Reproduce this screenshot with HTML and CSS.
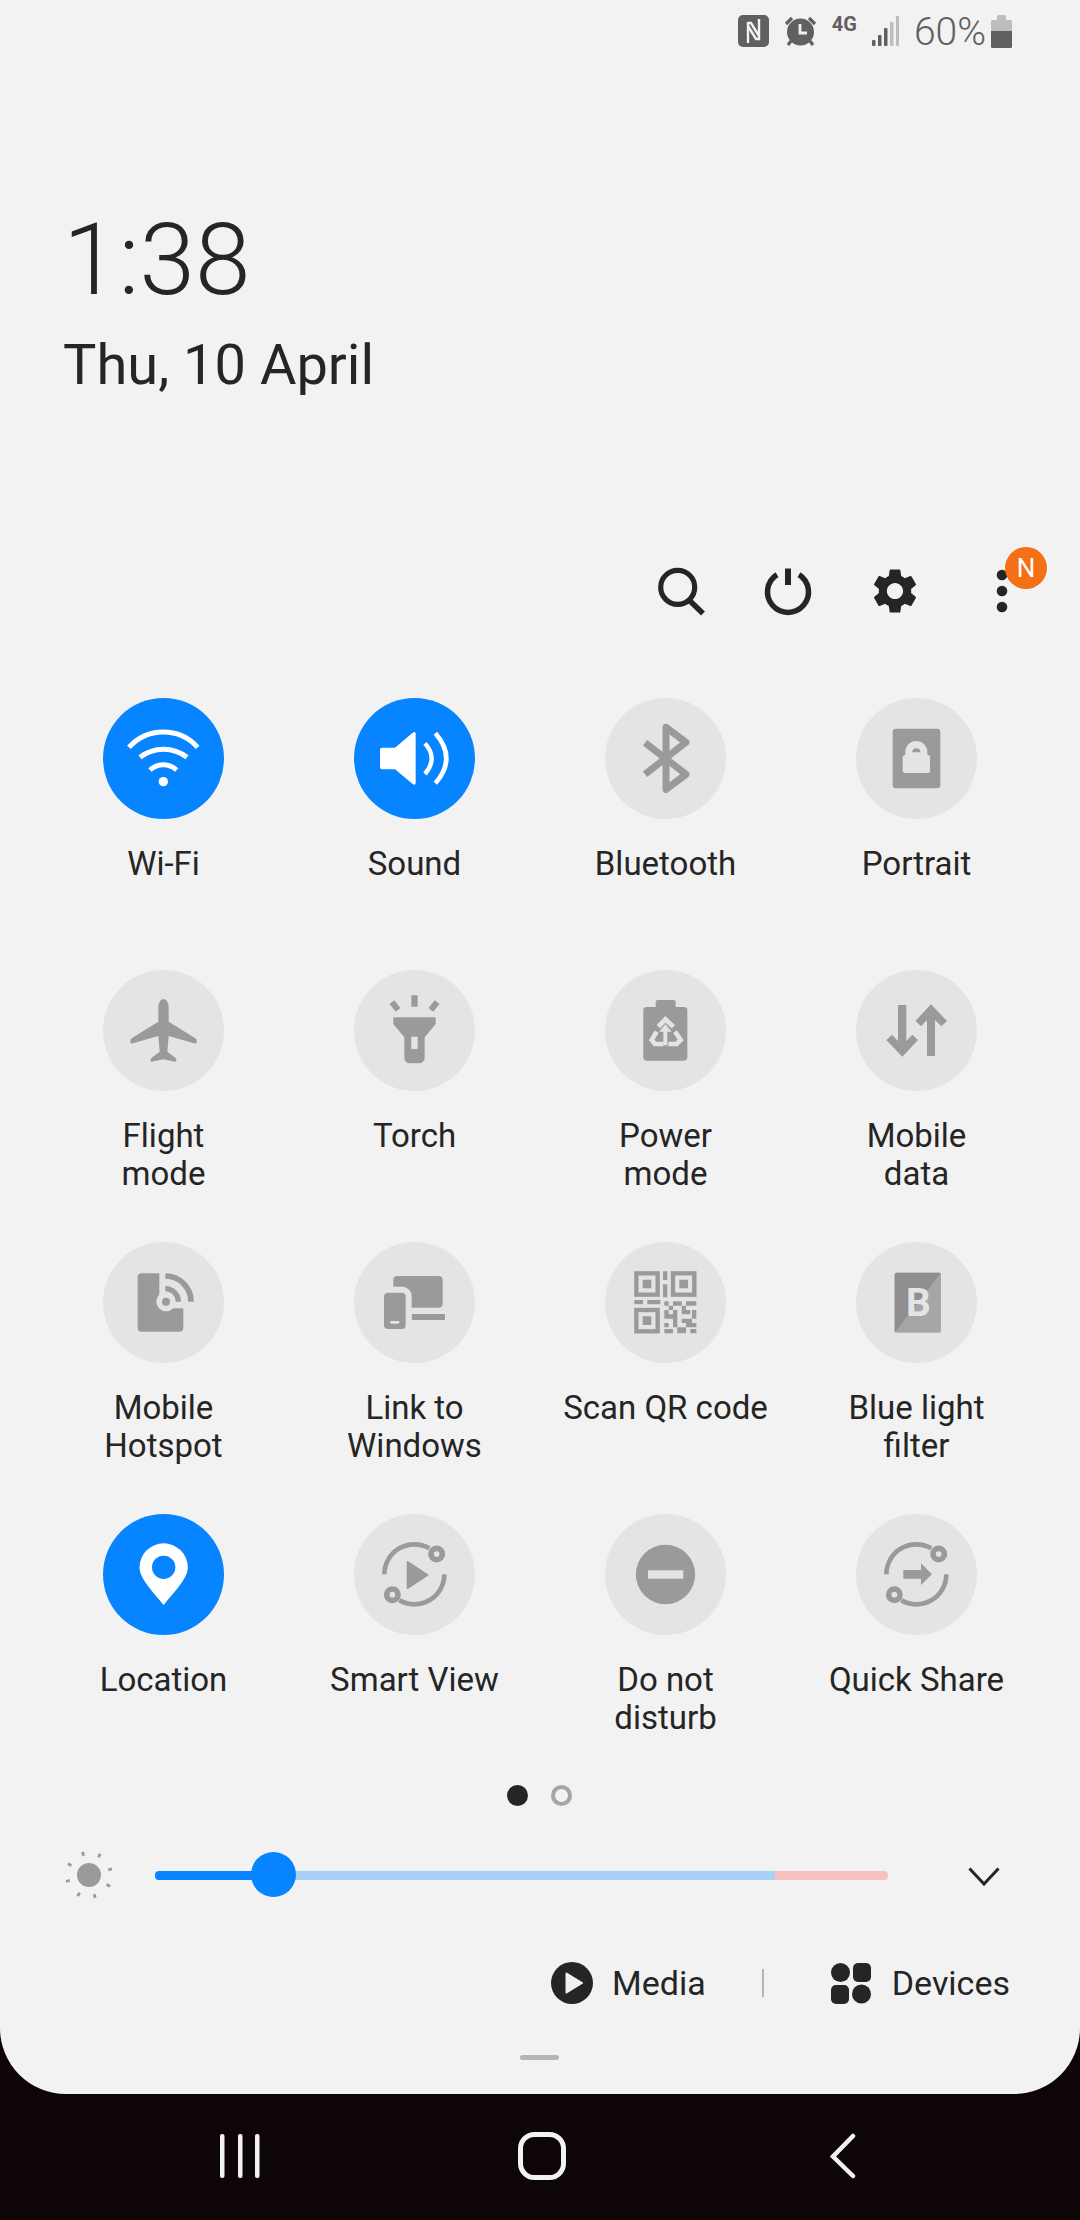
FILE: index.html
```html
<!DOCTYPE html>
<html lang="en">
<head>
    <meta charset="UTF-8">
    <meta name="viewport" content="width=device-width, initial-scale=1.0">
    <title>Quick panel</title>
    <link rel="stylesheet" href="styles.css">
</head>
<body>
    <div id="panel">
        <div id="status">
            <svg class="st-nfc" width="31" height="32" viewBox="0 0 31 32"><rect width="31" height="32" rx="5" fill="#606060"/><path d="M10 28V8h3l8 13M21 4v20h-3L10 11" fill="none" stroke="#f2f2f2" stroke-width="2.400"/></svg>
            <svg class="st-alarm" width="33" height="32" viewBox="0 0 33 32"><circle cx="16.500" cy="17" r="13.500" fill="#606060"/><path d="M2 9l6-6M25 3l6 6M7 26l-3 4M26 26l3 4" stroke="#606060" stroke-width="3.200" fill="none"/><path d="M16 9v9h7" stroke="#f2f2f2" stroke-width="2.800" fill="none"/></svg>
            <span class="st-net">4G</span>
            <svg class="st-signal" width="28" height="32" viewBox="0 0 28 32"><g fill="#606060"><rect x="1" y="24" width="3.500" height="6" rx="1"/><rect x="7" y="19" width="3.500" height="11" rx="1"/><rect x="13" y="12" width="3.500" height="18" rx="1"/></g><g fill="#bdbdbd"><rect x="19" y="6" width="3.500" height="24" rx="1"/><rect x="25" y="0" width="3" height="30" rx="1"/></g></svg>
            <span class="st-level">60%</span>
            <svg class="st-batt" width="21" height="33" viewBox="0 0 21 33"><path d="M6 1.500Q6 0 7.500 0h6Q15 0 15 1.500V5h4.500Q21 5 21 6.500V16H0V6.500Q0 5 1.500 5H6z" fill="#bdbdbd"/><path d="M0 16h21v15.500q0 1.500-1.500 1.500h-18Q0 33 0 31.500z" fill="#606060"/></svg>
        </div>

        <div id="clock">
            <div class="time">1:38</div>
            <div class="date">Thu, 10 April</div>
        </div>

        <div id="actions">
            <div class="action">
                <svg width="60" height="60" viewBox="0 0 60 60" fill="none" stroke="#252525"><circle cx="26.700" cy="26.300" r="17" stroke-width="5.200"/><path d="M39 40l13 12.500" stroke-width="5.500"/></svg>
            </div>
            <div class="action">
                <svg width="60" height="60" viewBox="0 0 60 60" fill="none" stroke="#252525"><path d="M19 13.600A20.500 20.500 0 1 0 41 13.600" stroke-width="5.500"/><path d="M30 7.500V24" stroke-width="6"/></svg>
            </div>
            <div class="action">
                <svg width="54" height="54" viewBox="0 0 24 24"><path fill="#252525" d="M19.140 12.940c.04-.3.06-.61.06-.94 0-.32-.02-.64-.07-.94l2.030-1.580c.18-.14.23-.41.12-.61l-1.920-3.320c-.12-.22-.37-.29-.59-.22l-2.390.96c-.5-.38-1.030-.7-1.620-.94l-.36-2.540c-.04-.24-.24-.41-.48-.41h-3.840c-.24 0-.43.17-.47.41l-.36 2.540c-.59.24-1.130.57-1.620.94l-2.390-.96c-.22-.08-.47 0-.59.22L2.740 8.870c-.12.21-.08.47.12.61l2.030 1.580c-.05.3-.09.63-.09.94s.02.64.07.94l-2.030 1.580c-.18.14-.23.41-.12.61l1.920 3.320c.12.22.37.29.59.22l2.390-.96c.5.38 1.030.7 1.620.94l.36 2.540c.05.24.24.41.48.41h3.840c.24 0 .44-.17.47-.41l.36-2.540c.59-.24 1.130-.56 1.620-.94l2.390.96c.22.08.47 0 .59-.22l1.920-3.320c.12-.22.07-.47-.12-.61l-2.010-1.580zM12 15.600c-1.980 0-3.600-1.620-3.600-3.600s1.620-3.600 3.600-3.600 3.600 1.620 3.600 3.600-1.620 3.600-3.600 3.600z"/></svg>
            </div>
            <div class="action more">
                <svg width="60" height="60" viewBox="0 0 60 60" fill="#252525"><circle cx="30" cy="14" r="5.300"/><circle cx="30" cy="30" r="5.300"/><circle cx="30" cy="46" r="5.300"/></svg>
                <span class="badge">N</span>
            </div>
        </div>

        <div id="grid">
            <div class="tile on">
                <svg class="ico" viewBox="0 0 363 363"><g fill="none" stroke="#fff" stroke-width="15"><path d="M78 148A138 138 0 0 1 284 148"/><path d="M111 178A114 114 0 0 1 252 178"/><path d="M141 216A58 58 0 0 1 221 216"/></g><circle cx="181" cy="251" r="14" fill="#fff"/></svg>
                <div class="lbl">Wi-Fi</div>
            </div>
            <div class="tile on">
                <svg class="ico" viewBox="0 0 363 363"><path fill="#fff" d="M84 149H123L176 104Q185 98 185 108V254Q185 264 176 258L123 214H84Q78 214 78 208V155Q78 149 84 149Z"/><g fill="none" stroke="#fff"><path d="M213 136Q253 181 213 228" stroke-width="13"/><path d="M244 106Q310 181 244 256" stroke-width="14"/></g></svg>
                <div class="lbl">Sound</div>
            </div>
            <div class="tile">
                <svg class="ico" viewBox="0 0 363 363"><path d="M120 134L243 229L183 274V88L243 133L120 229" fill="none" stroke="#9a9a9a" stroke-width="21" stroke-linejoin="round"/></svg>
                <div class="lbl">Bluetooth</div>
            </div>
            <div class="tile">
                <svg class="ico" viewBox="0 0 363 363"><rect x="110" y="92" width="143" height="179" rx="10" fill="#9a9a9a"/><rect x="140" y="171" width="82" height="54" rx="6" fill="#e4e4e4"/><path d="M148 175V162A33 33 0 0 1 214 162V175Z" fill="#e4e4e4"/><path d="M169 163A12 12 0 0 1 193 163Z" fill="#9a9a9a"/></svg>
                <div class="lbl">Portrait</div>
            </div>

            <div class="tile">
                <svg class="ico" viewBox="0 0 363 363"><path fill="#9a9a9a" d="M181.500 87C172 87 166 100 166 112V155L86 205Q80 210 82 217Q84 222 90 220L166 198L170 245L145 264Q140 272 146 275L181.500 268L217 275Q223 272 218 264L193 245L197 198L273 220Q279 222 281 217Q283 210 277 205L197 155V112C197 100 191 87 181.500 87Z"/></svg>
                <div class="lbl">Flight<br>mode</div>
            </div>
            <div class="tile">
                <svg class="ico" viewBox="0 0 363 363"><g fill="#9a9a9a"><rect x="172" y="76" width="19" height="34"/><rect x="114" y="93" width="18" height="30" transform="rotate(-38 123 108)"/><rect x="231" y="93" width="18" height="30" transform="rotate(38 240 108)"/><path d="M118 142H245V162L212 202V262Q212 280 194 280H169Q151 280 151 262V202L118 162Z"/></g><rect x="172" y="200" width="19" height="37" fill="#e4e4e4"/></svg>
                <div class="lbl">Torch</div>
            </div>
            <div class="tile">
                <svg class="ico" viewBox="0 0 363 363"><g fill="#9a9a9a"><rect x="115" y="111" width="132" height="161" rx="10"/><rect x="152" y="90" width="60" height="30" rx="6"/></g><g fill="none" stroke="#e4e4e4" stroke-width="14"><path d="M160 170L181 148L205 170"/><path d="M155 185L140 210L150 222H175"/><path d="M210 185L227 210L215 222H190"/></g><path fill="#e4e4e4" d="M181 162L200 185H187V226H175V185H163Z"/></svg>
                <div class="lbl">Power<br>mode</div>
            </div>
            <div class="tile">
                <svg class="ico" viewBox="0 0 363 363"><path fill="#9a9a9a" d="M126 105H151V213L169 194L186 210L139 260L91 210L108 194L126 213Z"/><path fill="#9a9a9a" d="M225 103L273 153L256 169L237 150V258H213V150L195 169L178 153Z"/></svg>
                <div class="lbl">Mobile<br>data</div>
            </div>

            <div class="tile">
                <svg class="ico" viewBox="0 0 363 363"><path fill="#9a9a9a" d="M116 94H169V199H241V257Q241 269 229 269H116Q104 269 104 257V106Q104 94 116 94Z"/><circle cx="189" cy="179" r="29" fill="#e4e4e4"/><circle cx="189" cy="179" r="12" fill="#9a9a9a"/><g fill="none" stroke="#9a9a9a"><path d="M187 102A77 77 0 0 1 264 179" stroke-width="17"/><path d="M187 140A39 39 0 0 1 226 179" stroke-width="16"/></g></svg>
                <div class="lbl">Mobile<br>Hotspot</div>
            </div>
            <div class="tile">
                <svg class="ico" viewBox="0 0 363 363"><rect x="118" y="102" width="148" height="95" rx="12" fill="#9a9a9a"/><rect x="173" y="216" width="100" height="18" fill="#9a9a9a"/><rect x="72" y="134" width="101" height="140" rx="28" fill="#e4e4e4"/><rect x="90" y="152" width="65" height="109" rx="12" fill="#9a9a9a"/><rect x="108" y="237" width="28" height="8" rx="4" fill="#e4e4e4"/></svg>
                <div class="lbl">Link to<br>Windows</div>
            </div>
            <div class="tile">
                <svg class="ico" viewBox="0 0 363 363"><g fill="none" stroke="#9a9a9a" stroke-width="13"><rect x="94" y="94" width="64" height="64"/><rect x="204" y="94" width="64" height="64"/><rect x="94" y="204" width="64" height="64"/></g><path fill="#9a9a9a" d="M113 113h26v26h-26zM223 113h26v26h-26zM113 223h26v26h-26zM174 88h13v26h-13zM174 127h13v39h-13zM88 174h26v13H88zM127 174h39v13h-39zM178 178h13v13h-13zM204 178h26v13h-26zM243 178h31v13h-31zM191 191h13v13h-13zM230 191h13v13h-13zM178 204h13v26h-13zM204 204h13v13h-13zM230 204h26v13h-26zM261 204h13v26h-13zM191 217h26v13h-26zM230 230h31v13h-31zM178 243h13v13h-13zM204 230h13v26h-13zM243 243h31v13h-31zM178 261h26v13h-26zM217 256h26v18h-26zM256 261h18v13h-18z"/></svg>
                <div class="lbl">Scan QR code</div>
            </div>
            <div class="tile">
                <svg class="ico" viewBox="0 0 363 363"><rect x="116" y="92" width="139" height="180" rx="6" fill="#a6a6a6"/><path fill="#8e8e8e" d="M116 98Q116 92 122 92H255L116 272Z"/><text class="bl" x="187" y="222" text-anchor="middle">B</text></svg>
                <div class="lbl">Blue light<br>filter</div>
            </div>

            <div class="tile on">
                <svg class="ico" viewBox="0 0 363 363"><path fill="#fff" d="M182 88A72.500 72.500 0 0 1 254.500 160C254.500 190 225 222 182 273C139 222 109.500 190 109.500 160A72.500 72.500 0 0 1 182 88Z"/><circle cx="182" cy="160" r="35" fill="#0784ff"/></svg>
                <div class="lbl">Location</div>
            </div>
            <div class="tile">
                <svg class="ico" viewBox="0 0 363 363"><g fill="none" stroke="#9a9a9a" stroke-width="14"><path d="M91 181A90 90 0 0 1 226 103"/><path d="M271 181A90 90 0 0 1 136 259"/></g><g fill="#e4e4e4" stroke="#9a9a9a" stroke-width="17"><circle cx="248" cy="120" r="17"/><circle cx="115" cy="242" r="17"/></g><path fill="#9a9a9a" stroke="#9a9a9a" stroke-width="6" stroke-linejoin="round" d="M161 144L220 183L161 222Z"/></svg>
                <div class="lbl">Smart View</div>
            </div>
            <div class="tile">
                <svg class="ico" viewBox="0 0 363 363"><circle cx="181.500" cy="181.500" r="89" fill="#9a9a9a"/><rect x="129" y="169" width="106" height="25" fill="#e4e4e4"/></svg>
                <div class="lbl">Do not<br>disturb</div>
            </div>
            <div class="tile">
                <svg class="ico" viewBox="0 0 363 363"><g fill="none" stroke="#9a9a9a" stroke-width="14"><path d="M91 181A90 90 0 0 1 226 103"/><path d="M271 181A90 90 0 0 1 136 259"/></g><g fill="#e4e4e4" stroke="#9a9a9a" stroke-width="17"><circle cx="248" cy="120" r="17"/><circle cx="115" cy="242" r="17"/></g><path fill="#9a9a9a" d="M142 168H195V148L228 181L195 213V194H142Z"/></svg>
                <div class="lbl">Quick Share</div>
            </div>
        </div>

        <div id="pager">
            <span class="dot cur"></span>
            <span class="dot"></span>
        </div>

        <div id="bright">
            <svg class="sun" width="66" height="66" viewBox="0 0 66 66"><circle cx="33" cy="33" r="12" fill="#9a9a9a"/><path d="M27.600 13.800L26.500 10M42.400 15.400L44.300 11.900M52.200 27.800L56 26.800M50.600 42.400L54.100 44.300M38.200 52.200L39.200 56M23.600 50.600L21.700 54.100M13.800 38.400L10 39.500M15.400 23.600L11.900 21.700" stroke="#9a9a9a" stroke-width="2.800" fill="none"/></svg>
            <div class="slider">
                <div class="track">
                    <div class="seg-done"></div>
                    <div class="seg-safe"></div>
                    <div class="seg-hot"></div>
                </div>
                <div class="thumb"></div>
            </div>
            <svg class="chev" width="32" height="19" viewBox="0 0 32 19"><path d="M1.500 1.500L16 17L30.500 1.500" fill="none" stroke="#252525" stroke-width="3"/></svg>
        </div>

        <div id="media">
            <svg width="42" height="42" viewBox="0 0 42 42"><circle cx="21" cy="21" r="21" fill="#252525"/><path d="M15.500 11.500L31 21L15.500 30.500Z" fill="#f2f2f2" stroke="#f2f2f2" stroke-width="2" stroke-linejoin="round"/></svg>
            <span class="media-txt">Media</span>
            <span class="sep"></span>
            <svg class="dev-ico" width="40" height="42" viewBox="0 0 40 42" fill="#252525"><circle cx="9.500" cy="10.500" r="9.500"/><rect x="22" y="1" width="18" height="19" rx="5"/><rect x="0" y="23" width="18" height="19" rx="5"/><circle cx="30.500" cy="32" r="9.500"/></svg>
            <span class="dev-txt">Devices</span>
        </div>

        <div id="handle"></div>
    </div>

    <div id="nav">
        <div class="nav-btn">
            <svg width="44" height="44" viewBox="0 0 44 44" fill="#f2f2f2"><rect x="2" y="0" width="4.500" height="44" rx="2"/><rect x="20" y="0" width="4.500" height="44" rx="2"/><rect x="37" y="0" width="4.500" height="44" rx="2"/></svg>
        </div>
        <div class="nav-btn">
            <svg width="48" height="48" viewBox="0 0 48 48"><rect x="2.500" y="2.500" width="43" height="43" rx="14" fill="none" stroke="#f2f2f2" stroke-width="5"/></svg>
        </div>
        <div class="nav-btn">
            <svg width="28" height="46" viewBox="0 0 28 46"><path d="M24 3L4 23.500L24 43" fill="none" stroke="#f2f2f2" stroke-width="4.500" stroke-linecap="round"/></svg>
        </div>
    </div>
</body>
</html>
```

FILE: styles.css
```css
*{
    margin: 0;
    padding: 0;
    box-sizing: border-box;
    font-family: Roboto, 'Liberation Sans', sans-serif;
}

body{
    width: 1080px;
    height: 2220px;
    background: #0e0606;
    overflow: hidden;
}

#panel{
    height: 2094px;
    background: #f2f2f2;
    border-radius: 0 0 66px 66px;
    overflow: hidden;
}

/* status bar */
#status{
    height: 64px;
    display: flex;
    justify-content: flex-end;
    align-items: flex-start;
    padding: 15px 68px 0 0;
    color: #606060;
}
#status svg{
    flex: none;
}
.st-alarm{
    margin-left: 15px;
}
.st-net{
    margin-left: 15px;
    font-size: 20px;
    font-weight: 700;
    line-height: 18px;
}
.st-signal{
    margin-left: 14px;
    margin-top: 1px;
}
.st-level{
    margin-left: 15px;
    font-size: 39px;
    font-weight: 300;
    line-height: 36px;
    margin-top: -1px;
}
.st-batt{
    margin-left: 5px;
}

/* clock */
#clock{
    padding-left: 63px;
    color: #252525;
}
.time{
    margin-top: 143px;
    font-size: 100px;
    font-weight: 300;
    line-height: 105px;
}
.date{
    margin-top: 18px;
    font-size: 56px;
    line-height: 70px;
}

/* search, power, settings, more */
#actions{
    margin-top: 161px;
    height: 60px;
    display: flex;
    justify-content: flex-end;
    padding-right: 25px;
}
.action{
    width: 107px;
    height: 60px;
    display: flex;
    align-items: center;
    justify-content: center;
}
.more{
    position: relative;
}
.badge{
    position: absolute;
    left: 57px;
    top: -14px;
    width: 42px;
    height: 42px;
    border-radius: 50%;
    background: #f46f16;
    color: #fff;
    font-size: 26px;
    line-height: 42px;
    text-align: center;
}

/* quick toggles */
#grid{
    margin-top: 77px;
    padding: 0 38px;
    display: grid;
    grid-template-columns: repeat(4, 251px);
    grid-template-rows: 272px 272px 272px 240px;
}
.tile{
    display: flex;
    flex-direction: column;
    align-items: center;
}
.ico{
    width: 121px;
    height: 121px;
    border-radius: 50%;
    background: #e4e4e4;
}
.on .ico{
    background: #0784ff;
}
.lbl{
    margin-top: 26px;
    font-size: 33px;
    line-height: 38px;
    color: #252525;
    text-align: center;
    white-space: nowrap;
}
.bl{
    font-size: 116px;
    font-weight: 700;
    fill: #e4e4e4;
}

#pager{
    margin-top: 31px;
    display: flex;
    justify-content: center;
    gap: 23px;
    padding-right: 1px;
}
.dot{
    width: 21px;
    height: 21px;
    border-radius: 50%;
    border: 4px solid #a5a5a5;
}
.dot.cur{
    background: #252525;
    border: none;
}

/* brightness */
#bright{
    margin-top: 46px;
    height: 46px;
    display: flex;
    align-items: center;
    padding-left: 56px;
}
.sun{
    flex: none;
    margin-right: 33px;
}
.slider{
    position: relative;
    width: 733px;
    height: 46px;
    display: flex;
    align-items: center;
}
.track{
    width: 100%;
    height: 9px;
    border-radius: 4px;
    display: flex;
    overflow: hidden;
}
.seg-done{
    width: 118px;
    background: #0784ff;
}
.seg-safe{
    width: 502px;
    background: #a9d0f5;
}
.seg-hot{
    flex: 1;
    background: #f7c1bf;
}
.thumb{
    position: absolute;
    left: 96px;
    top: 0;
    width: 45px;
    height: 45px;
    border-radius: 50%;
    background: #0784ff;
}
.chev{
    margin-left: 80px;
    margin-top: 2px;
}

/* media and devices */
#media{
    margin-top: 64px;
    height: 42px;
    padding-right: 70px;
    display: flex;
    justify-content: flex-end;
    align-items: center;
    font-size: 34px;
    color: #252525;
}
.media-txt{
    margin-left: 19px;
}
.sep{
    width: 2px;
    height: 28px;
    background: #b5b5b5;
    margin-left: 56px;
}
.dev-ico{
    margin-left: 67px;
}
.dev-txt{
    margin-left: 21px;
}

#handle{
    width: 39px;
    height: 5px;
    border-radius: 3px;
    background: #b5b5b5;
    margin: 51px 0 0 520px;
}

/* nav bar */
#nav{
    height: 126px;
    padding-left: 3px;
    display: flex;
    justify-content: center;
    align-items: center;
}
.nav-btn{
    width: 301.500px;
    display: flex;
    justify-content: center;
    padding-bottom: 2px;
}
```
